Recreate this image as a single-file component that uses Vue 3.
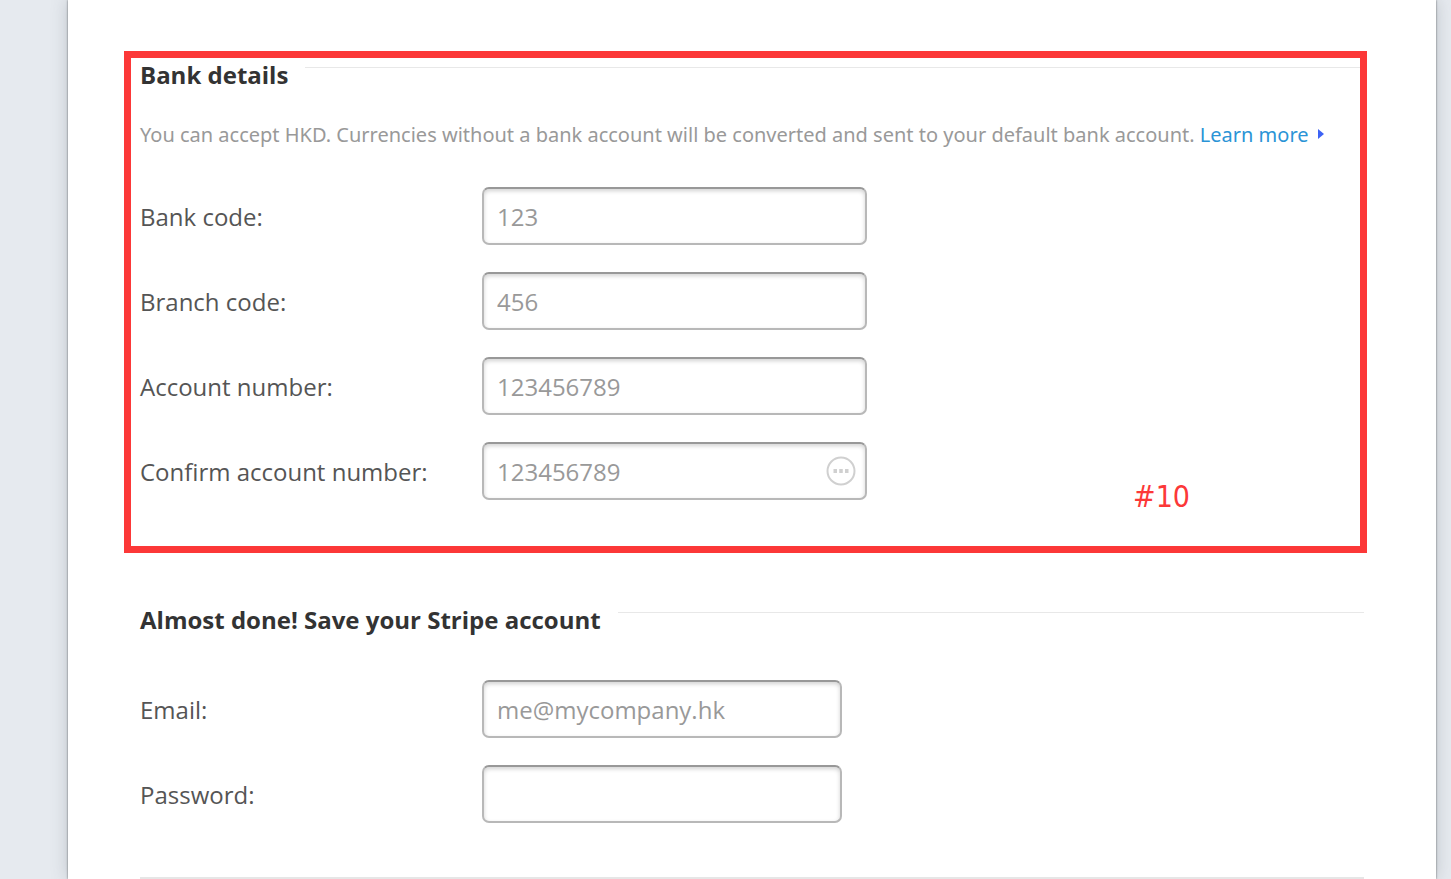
<script setup>
import { reactive } from 'vue';

const bankFields = [
    { id: 'bank-code', label: 'Bank code:', placeholder: '123' },
    { id: 'branch-code', label: 'Branch code:', placeholder: '456' },
    { id: 'account-number', label: 'Account number:', placeholder: '123456789' },
    { id: 'confirm-number', label: 'Confirm account number:', placeholder: '123456789', badge: true },
];

const loginFields = [
    { id: 'email', label: 'Email:', type: 'email', placeholder: 'me@mycompany.hk' },
    { id: 'password', label: 'Password:', type: 'password', placeholder: '' },
];

const form = reactive({});
</script>

<template>
    <div class="page">
        <form class="sheet" @submit.prevent>
            <!-- Bank details -->
            <section class="bank">
                <h2 class="title">Bank details</h2>
                <p class="intro">
                    You can accept HKD. Currencies without a bank account will be converted and sent to your default bank account.
                    <a href="#" class="more">Learn more<svg class="arrow" viewBox="0 0 6 10" aria-hidden="true"><path d="M0 0L6 5L0 10Z" /></svg></a>
                </p>
                <div class="fields">
                    <div v-for="field in bankFields" :key="field.id" class="row">
                        <label :for="field.id">{{ field.label }}</label>
                        <div class="control">
                            <input :id="field.id" v-model="form[field.id]" type="text" :placeholder="field.placeholder">
                            <svg v-if="field.badge" class="badge" viewBox="0 0 30 30" aria-hidden="true">
                                <circle cx="15" cy="15" r="13.5" />
                                <path d="M7.5 13h3.5v4H7.5zM13.25 13h3.5v4h-3.5zM19 13h3.5v4H19z" />
                            </svg>
                        </div>
                    </div>
                </div>
                <span class="mark">#10</span>
            </section>

            <!-- Account -->
            <section class="account">
                <h2 class="title">Almost done! Save your Stripe account</h2>
                <div class="fields">
                    <div v-for="field in loginFields" :key="field.id" class="row">
                        <label :for="field.id">{{ field.label }}</label>
                        <div class="control">
                            <input :id="field.id" v-model="form[field.id]" :type="field.type" :placeholder="field.placeholder">
                        </div>
                    </div>
                </div>
            </section>
            <hr class="divider">
        </form>
    </div>
</template>

<style>
body {
    margin: 0;
    background: #e6eaef;
}
</style>

<style scoped>
.page {
    box-sizing: border-box;
    min-height: 100vh;
    padding: 0 15px 0 68px;
    overflow: hidden;
    display: flex;
    font-family: "Segoe UI", "Open Sans", "Noto Sans", sans-serif;
    color: #555;
}

.sheet {
    box-sizing: border-box;
    flex: 1;
    min-width: 0;
    padding: 51px 72px 0;
    background: #fff;
    box-shadow: 0 0 2px rgba(0, 0, 0, 0.55), 0 0 16px rgba(70, 80, 90, 0.25);
}

/* Sections */
.bank {
    position: relative;
    margin: 0 -3px 0 -16px;
    padding: 0 0 46px 9px;
    border: 7px solid #fc3838;
}

.account {
    margin-top: 50px;
}

.title {
    display: flex;
    margin: 0;
    font-size: 24px;
    line-height: 34px;
    font-weight: 700;
    color: #333;
}

.title::after {
    content: "";
    flex: 1;
    height: 1px;
    margin: 9px 0 0 17px;
    background: #e8e8e8;
}

.intro {
    margin: 28px 0 0;
    font-family: "Segoe UI", "Noto Sans", sans-serif;
    font-size: 20px;
    line-height: 30px;
    color: #999;
}

.more {
    color: #2a94d6;
    text-decoration: none;
    white-space: nowrap;
}

.arrow {
    width: 6px;
    height: 10px;
    margin-left: 9px;
    vertical-align: 3px;
    fill: #3d63f5;
}

/* Fields */
.fields {
    display: flex;
    flex-direction: column;
    gap: 27px;
}

.bank .fields {
    margin-top: 37px;
}

.account .fields {
    margin-top: 43px;
}

.row {
    display: grid;
    grid-template-columns: 342px 1fr;
    align-items: center;
    font-size: 24px;
    line-height: 34px;
}

label {
    padding-top: 2px;
}

.control {
    position: relative;
    width: 385px;
}

.account .control {
    width: 360px;
}

input {
    display: block;
    box-sizing: border-box;
    width: 100%;
    height: 58px;
    padding: 0 13px;
    border: 2px solid #b8b8b8;
    border-top-color: #989898;
    border-radius: 7px;
    outline: none;
    background: #fff;
    box-shadow: inset 0 2px 4px rgba(0, 0, 0, 0.18);
    font: inherit;
    color: #555;
}

input::placeholder {
    color: #999;
    opacity: 1;
}

.badge {
    position: absolute;
    top: 14px;
    right: 11px;
    width: 30px;
    height: 30px;
    fill: #d0d0d0;
}

.badge circle {
    fill: none;
    stroke: #d0d0d0;
    stroke-width: 2;
}

.mark {
    position: absolute;
    right: 170px;
    bottom: 31px;
    font-family: "DejaVu Sans Condensed", "DejaVu Sans", sans-serif;
    font-size: 30px;
    line-height: 36px;
    color: #fc3838;
}

.divider {
    height: 2px;
    margin: 54px 0 0;
    border: 0;
    background: #e6e6e6;
}
</style>
